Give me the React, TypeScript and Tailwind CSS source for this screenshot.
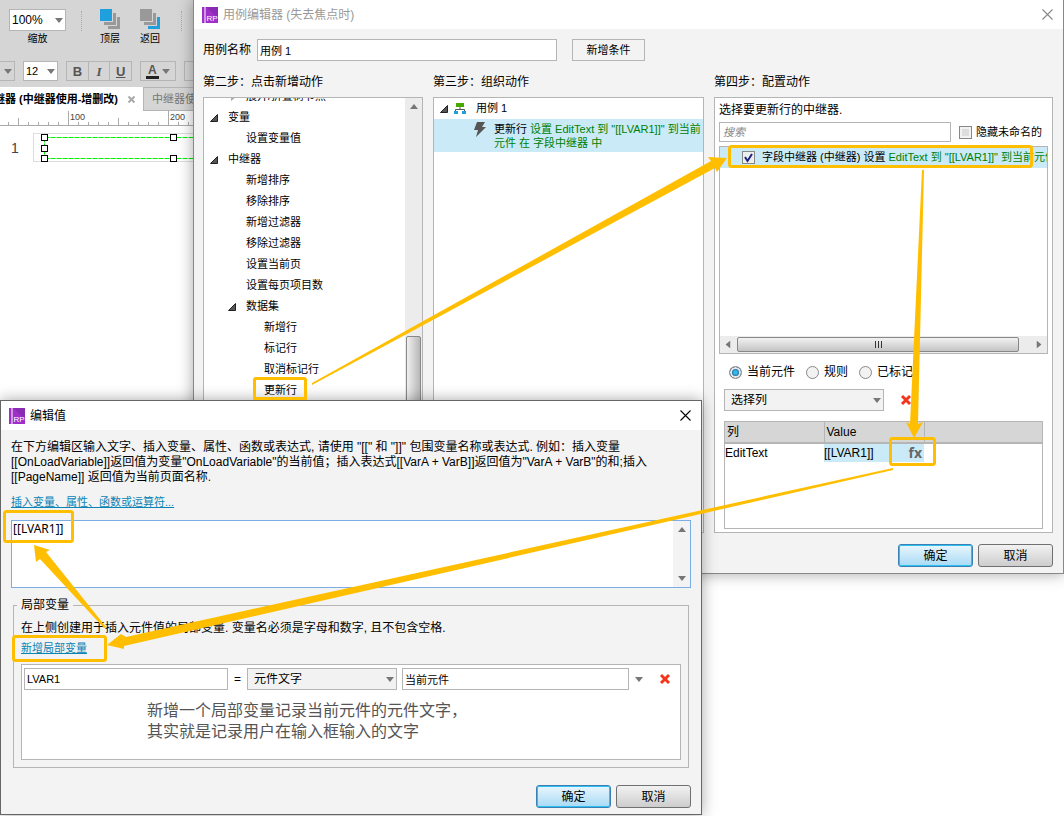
import { useState } from "react";
import type { ReactNode } from "react";
import clsx from "clsx";

const FONT = "font-['Liberation_Sans','Noto_Sans_CJK_SC',sans-serif]";

type TreeRow = { label: string; level: 0 | 1 | 2 | 3; open?: boolean };

const actionTree: TreeRow[] = [
  { label: "变量", level: 0, open: true },
  { label: "设置变量值", level: 2 },
  { label: "中继器", level: 0, open: true },
  { label: "新增排序", level: 2 },
  { label: "移除排序", level: 2 },
  { label: "新增过滤器", level: 2 },
  { label: "移除过滤器", level: 2 },
  { label: "设置当前页", level: 2 },
  { label: "设置每页项目数", level: 2 },
  { label: "数据集", level: 1, open: true },
  { label: "新增行", level: 3 },
  { label: "标记行", level: 3 },
  { label: "取消标记行", level: 3 },
  { label: "更新行", level: 3 },
  { label: "删除行", level: 3 },
];

const levelPadding = {
  0: "pl-1.5",
  1: "pl-6",
  2: "pl-6",
  3: "pl-[42px]",
};

function Caret({ className }: { className?: string }) {
  return (
    <svg viewBox="0 0 8 5" className={clsx("h-[5px] w-2 shrink-0", className)}>
      <path d="M0 0h8L4 5z" fill="#777" />
    </svg>
  );
}

function OpenMark({ show = true }: { show?: boolean }) {
  return (
    <svg viewBox="0 0 8 8" className="h-2 w-2 shrink-0">
      {show && <path d="M7.5 0.5v7h-7z" fill="#555" stroke="#222" />}
    </svg>
  );
}

function Logo() {
  return (
    <svg viewBox="0 0 16 16" className="h-4 w-4 shrink-0">
      <rect width="16" height="16" fill="#a02fc9" />
      <path d="M4 0h12v11z" fill="#8a2bb3" />
      <rect x="2.5" width="1" height="16" fill="#fff" />
      <text
        x="4.5"
        y="14"
        fontSize="8"
        fontFamily="Liberation Sans, sans-serif"
        fill="#fff"
      >
        RP
      </text>
    </svg>
  );
}

function RedCross() {
  return (
    <svg viewBox="0 0 12 12" className="h-3 w-3">
      <path d="M2 2l8 8M10 2l-8 8" stroke="#f4361e" strokeWidth="3" />
    </svg>
  );
}

function TitleBar({ title, active }: { title: string; active?: boolean }) {
  return (
    <header className="flex h-[29px] shrink-0 items-center gap-[5px] bg-white pr-2.5 pl-2">
      <Logo />
      <h1
        className={clsx(
          "flex-1 text-xs",
          active ? "text-black" : "text-[#999]"
        )}
      >
        {title}
      </h1>
      <button aria-label="关闭">
        <svg viewBox="0 0 11 11" className="h-[11px] w-[11px]">
          <path
            d="M0.5 0.5l10 10M10.5 0.5l-10 10"
            stroke={active ? "#000" : "#888"}
            strokeWidth="1.1"
          />
        </svg>
      </button>
    </header>
  );
}

function DialogButton({
  primary,
  children,
}: {
  primary?: boolean;
  children: ReactNode;
}) {
  return (
    <button
      className={clsx(
        "h-[23px] w-[75px] rounded-[3px] border text-xs leading-none text-black",
        primary
          ? "border-[#3c7fb1] bg-linear-to-b from-[#e9f6fd] to-[#a7daf5] inset-ring inset-ring-[#2cc0f5]"
          : "border-[#707070] bg-linear-to-b from-[#f2f2f2] to-[#cdcdcd]"
      )}
    >
      {children}
    </button>
  );
}

function SelectBox({
  label,
  value,
  className,
}: {
  label: string;
  value: string;
  className?: string;
}) {
  return (
    <div className={clsx("relative", className)}>
      <select
        aria-label={label}
        className="block h-[22px] w-full appearance-none border border-[#b5b5b5] bg-[#f2f2f2] pl-1.5 text-xs leading-none"
      >
        <option>{value}</option>
      </select>
      <Caret className="pointer-events-none absolute top-[9px] right-[3px]" />
    </div>
  );
}

function LayersIcon({ top }: { top: boolean }) {
  return (
    <svg viewBox="0 0 20 20" className="h-5 w-5">
      <path
        d="M17 8v9H8v3h12V8z"
        fill={top ? "#999" : "#1f9fdc"}
      />
      <path d="M13 4v9H4v3h12V4z" fill="#999" />
      <rect width="12" height="12" fill={top ? "#1f9fdc" : "#999"} />
    </svg>
  );
}

function Ruler() {
  const ticks = Array.from({ length: 20 }, (_, i) => i * 10 + 8.5);
  return (
    <svg className="block h-[15px] w-full bg-white">
      {ticks.map((x) => {
        const major = x === 68.5 || x === 168.5;
        const middle = x === 18.5 || x === 118.5;
        const y = major ? 0 : middle ? 7 : 11;
        return <path key={x} d={`M${x} ${y}V15`} stroke="#aaa" />;
      })}
      <path d="M0 14.5H1064" stroke="#aaa" />
      <g fontSize="9" fill="#444">
        <text x="70" y="9">
          100
        </text>
        <text x="170" y="9">
          200
        </text>
      </g>
    </svg>
  );
}

function Workspace() {
  const handles = [
    [41, 8],
    [41, 19],
    [41, 29],
    [170, 8],
    [170, 29],
  ];
  return (
    <div className="flex h-full flex-col">
      <div className="h-[87px] bg-[#d5d5d5] pt-[9px]">
        <div className="flex h-[35px] items-start pl-[9px] text-[10px] leading-3">
          <label className="flex w-[57px] flex-col items-center gap-0.5">
            <span className="relative w-full">
              <select className="block h-[22px] w-full appearance-none border border-[#b5b5b5] bg-white pl-0.5 text-xs">
                <option>100%</option>
              </select>
              <Caret className="absolute top-[9px] right-[3px]" />
            </span>
            缩放
          </label>
          <span className="mt-0.5 ml-[15px] h-5 border-l border-dotted border-[#aaa]" />
          <button className="ml-[18px] flex flex-col items-center gap-1">
            <LayersIcon top />
            顶层
          </button>
          <button className="ml-5 flex flex-col items-center gap-1">
            <LayersIcon top={false} />
            返回
          </button>
          <span className="mt-0.5 ml-[21px] h-5 border-l border-dotted border-[#aaa]" />
        </div>
        <div className="mt-[17px] flex h-5 items-stretch gap-2 text-[#555]">
          <button
            aria-label="字体"
            className="flex w-[15px] items-center border border-l-0 border-[#b5b5b5] pl-1"
          >
            <Caret />
          </button>
          <span className="relative w-[35px]">
            <select
              aria-label="字号"
              className="block h-5 w-full appearance-none border border-[#b5b5b5] bg-white pl-0.5 text-[11px] text-black"
            >
              <option>12</option>
            </select>
            <Caret className="absolute top-2 right-[3px]" />
          </span>
          <div className="flex w-[66px] divide-x divide-[#b5b5b5] border border-[#b5b5b5] text-[13px] leading-none">
            <button className="flex-1 font-bold">B</button>
            <button className="flex-1 font-['Liberation_Serif',serif] font-bold italic">
              I
            </button>
            <button className="flex-1 font-bold underline">U</button>
          </div>
          <button
            aria-label="文字颜色"
            className="flex w-9 items-center justify-between border border-[#b5b5b5] px-[5px] text-xs font-bold"
          >
            <span className="border-b-[3px] border-[#222] px-0.5 leading-3">
              A
            </span>
            <Caret />
          </button>
          <span className="w-10 border border-[#b5b5b5]" />
        </div>
      </div>
      <div className="flex h-6 bg-[#d5d5d5] text-[11px]">
        <div className="flex w-[143px] items-center justify-end gap-2.5 overflow-hidden bg-white pr-2 font-bold whitespace-nowrap">
          <span>中继器 (中继器使用-增删改)</span>
          <button aria-label="关闭标签">
            <svg viewBox="0 0 7 7" className="h-[7px] w-[7px]">
              <path d="M0.5 0.5l6 6M6.5 0.5l-6 6" stroke="#aaa" strokeWidth="2" />
            </svg>
          </button>
        </div>
        <div className="flex flex-1 items-center border border-[#b5b5b5] pl-2 text-[#777]">
          中继器使用
        </div>
      </div>
      <Ruler />
      <div className="flex-1 bg-white">
        <svg className="h-20 w-[200px]">
          <rect x="33.5" y="7.5" width="200" height="28" fill="none" stroke="#ddd" />
          <path
            d="M44.5 11.5H200M44.5 32.5H200M44.5 11.5V32"
            stroke="#00f000"
            strokeDasharray="5 1"
          />
          {handles.map(([x, y]) => (
            <rect
              key={`${x}-${y}`}
              x={x + 0.5}
              y={y + 0.5}
              width="6"
              height="6"
              fill="#fff"
              stroke="#000"
            />
          ))}
          <text x="11" y="27" fontSize="14" fill="#444">
            1
          </text>
        </svg>
      </div>
    </div>
  );
}

function ActionTree() {
  return (
    <div className="flex h-[436px] border border-[#b5b5b5] bg-white">
      <div className="flex-1 overflow-hidden">
        <ul className="-mt-[12px] text-[11px] leading-[21px]">
          <li className="flex h-[21px] items-center gap-2 pl-[26px]">
            <svg viewBox="0 0 8 8" className="h-2 w-2">
              <path d="M1 0l5 4-5 4z" fill="#aaa" />
            </svg>
            展开/折叠树节点
          </li>
          {actionTree.map((row) => (
            <li
              key={row.label}
              className={clsx(
                "flex h-[21px] items-center gap-2.5",
                levelPadding[row.level]
              )}
            >
              <OpenMark show={!!row.open} />
              {row.label}
            </li>
          ))}
        </ul>
      </div>
      <div className="flex w-[17px] flex-col items-center bg-[#ececec] pt-1.5">
        <Caret className="rotate-180" />
        <div className="mt-[227px] h-[150px] w-[15px] rounded-xs border border-[#888] bg-linear-to-r from-[#f0f0f0] to-[#b8b8b8]" />
      </div>
    </div>
  );
}

function CasePanel() {
  return (
    <div className="h-[436px] border border-[#b5b5b5] bg-white text-[11px]">
      <div className="flex h-[21px] items-center pl-1.5">
        <OpenMark />
        <svg viewBox="0 0 12 12" className="mr-[10px] ml-[6px] h-3 w-3">
          <rect x="2" width="8" height="4" fill="#4a0" />
          <path d="M6 4v3M1.500 9V6.500h9V9" stroke="#555" fill="none" />
          <rect y="8" width="4" height="3" fill="#1f9fdc" />
          <rect x="8" y="8" width="4" height="3" fill="#1f9fdc" />
        </svg>
        用例 1
      </div>
      <div className="flex h-[33px] gap-2 bg-[#cbeaf7] pt-[3px] pl-[40px] leading-[14px] whitespace-nowrap">
        <svg viewBox="0 0 12 15" className="h-[15px] w-3 shrink-0">
          <path d="M3 0h8L8 5h4L2 15l2-7H0z" fill="#555" />
        </svg>
        <p className="text-[#008000]">
          <span className="text-black">更新行</span> 设置 EditText 到
          "[[LVAR1]]" 到当前
          <br />
          元件 在 字段中继器 中
        </p>
      </div>
    </div>
  );
}

function TargetRadio({
  label,
  checked,
  onChange,
}: {
  label: string;
  checked: boolean;
  onChange: () => void;
}) {
  return (
    <label className="flex items-center gap-[5px]">
      <input
        type="radio"
        name="target"
        checked={checked}
        onChange={onChange}
        className="h-[13px] w-[13px] appearance-none rounded-full border border-[#888] bg-[#f2f2f2] p-0.5 bg-clip-border checked:bg-radial checked:from-[#39b6ea] checked:from-20% checked:to-[#0c4a78] checked:to-60% checked:inset-ring-2 checked:inset-ring-[#e4e9ec]"
      />
      {label}
    </label>
  );
}

function ConfigPanel() {
  const [target, setTarget] = useState("当前元件");
  const [picked, setPicked] = useState(true);

  return (
    <div className="h-[436px] border border-[#b5b5b5] bg-white pr-1 pl-1 text-xs">
      <p className="pt-[5px] leading-[14px]">选择要更新行的中继器.</p>
      <div className="mt-[5px] flex items-center text-[11px]">
        <input
          aria-label="搜索"
          placeholder="搜索"
          className="h-5 min-w-0 flex-1 border border-[#b5b5b5] px-[3px] italic placeholder:text-[#888]"
        />
        <label className="ml-2 flex items-center gap-1 pr-1.5 whitespace-nowrap">
          <input
            type="checkbox"
            className="h-[13px] w-[13px] appearance-none border border-[#888] bg-[#ddd] inset-ring-2 inset-ring-[#f2f2f2]"
          />
          隐藏未命名的
        </label>
      </div>
      <div className="mt-1 flex h-[208px] flex-col border border-[#b5b5b5]">
        <label className="flex h-[21px] items-center overflow-hidden bg-[#cbeaf7] pl-[22px] text-[11px] whitespace-nowrap">
          <span className="relative mr-[7px] h-[13px] w-[13px] shrink-0">
            <input
              type="checkbox"
              checked={picked}
              onChange={() => setPicked(!picked)}
              className="block h-[13px] w-[13px] appearance-none border border-[#888] bg-[#eee]"
            />
            {picked && (
              <svg
                viewBox="0 0 13 13"
                className="pointer-events-none absolute inset-0"
              >
                <path d="M3 6l2.500 4L10 3" stroke="#1a237e" strokeWidth="2" fill="none" />
              </svg>
            )}
          </span>
          字段中继器 (中继器) 设置&nbsp;
          <span className="text-[#008000]">
            EditText 到 "[[LVAR1]]" 到当前元件
          </span>
        </label>
        <div className="flex-1" />
        <div className="flex h-[17px] items-center justify-between bg-[#ececec] px-1">
          <Caret className="rotate-90" />
          <div className="mr-4 ml-[5px] flex h-[15px] flex-1 items-center justify-center gap-0.5 rounded-xs border border-[#888] bg-linear-to-b from-[#f2f2f2] to-[#c4c4c4]">
            <span className="h-[7px] w-px bg-[#333]" />
            <span className="h-[7px] w-px bg-[#333]" />
            <span className="h-[7px] w-px bg-[#333]" />
          </div>
          <Caret className="-rotate-90" />
        </div>
      </div>
      <div className="mt-[11px] flex h-[14px] items-center gap-[11px] pl-[10px]">
        {["当前元件", "规则", "已标记"].map((name) => (
          <TargetRadio
            key={name}
            label={name}
            checked={target === name}
            onChange={() => setTarget(name)}
          />
        ))}
      </div>
      <div className="mt-2.5 flex items-center gap-4 pl-[5px]">
        <SelectBox label="列" value="选择列" className="w-[160px]" />
        <button aria-label="删除列">
          <RedCross />
        </button>
      </div>
      <div className="mt-2.5 mr-[5px] ml-[5px] h-[108px] border border-[#b5b5b5]">
        <table className="w-full table-fixed border-collapse text-left">
          <thead>
            <tr className="h-[21px] border-b-2 border-[#b5b5b5] bg-[#d6d6d6]">
              <th className="w-[99px] border-r border-[#b5b5b5] pl-0.5 font-normal">
                列
              </th>
              <th className="w-[100px] border-r border-[#b5b5b5] pl-0.5 font-normal">
                Value
              </th>
              <th />
            </tr>
          </thead>
          <tbody>
            <tr className="h-[18px]">
              <td>EditText</td>
              <td className="bg-[#cbeaf7]">
                <div className="flex items-center justify-between pr-0.5 leading-[18px]">
                  [[LVAR1]]
                  <button className="font-['Open_Sans',sans-serif] text-sm leading-[18px] font-bold text-[#666]">
                    fx
                  </button>
                </div>
              </td>
              <td />
            </tr>
          </tbody>
        </table>
      </div>
    </div>
  );
}

function CaseEditor() {
  return (
    <section className="absolute top-0 right-0 left-[193px] border-r border-b border-l border-[#888] bg-[#f3f3f3] shadow-[0_0_14px_rgba(0,0,0,0.35)]">
      <TitleBar title="用例编辑器 (失去焦点时)" />
      <div className="pt-2.5 pr-2.5 pb-1.5 pl-[9px] text-xs">
        <div className="flex h-[22px] items-center">
          <label htmlFor="case-name">用例名称</label>
          <input
            id="case-name"
            defaultValue="用例 1"
            className="mr-[15px] ml-1.5 h-[22px] w-[300px] border border-[#b5b5b5] bg-white px-0.5 text-[11px]"
          />
          <button className="h-[22px] w-[73px] border border-[#b5b5b5] text-[11px]">
            新增条件
          </button>
        </div>
        <div className="mt-[14px] flex gap-2.5">
          <div className="w-[220px] shrink-0">
            <h2 className="mb-2 leading-[14px]">第二步：点击新增动作</h2>
            <ActionTree />
          </div>
          <div className="min-w-0 flex-1">
            <h2 className="mb-2 leading-[14px]">第三步：组织动作</h2>
            <CasePanel />
          </div>
          <div className="w-[339px] shrink-0">
            <h2 className="mb-2 leading-[14px]">第四步：配置动作</h2>
            <ConfigPanel />
          </div>
        </div>
        <div className="mt-[11px] flex justify-end gap-[5px]">
          <DialogButton primary>确定</DialogButton>
          <DialogButton>取消</DialogButton>
        </div>
      </div>
    </section>
  );
}

function ValueEditor() {
  return (
    <section className="absolute top-[400px] left-0 w-[702px] border border-[#666] bg-[#f3f3f3] shadow-[0_0_14px_rgba(0,0,0,0.35)]">
      <TitleBar title="编辑值" active />
      <div className="px-2.5 pt-2.5 pb-1.5 text-xs">
        <p className="leading-[15px] whitespace-nowrap">
          在下方编辑区输入文字、插入变量、属性、函数或表达式, 请使用 "[[" 和
          "]]" 包围变量名称或表达式. 例如：插入变量
          <br />
          [[OnLoadVariable]]返回值为变量"OnLoadVariable"的当前值；插入表达式[[VarA
          + VarB]]返回值为"VarA + VarB"的和;插入
          <br />
          [[PageName]] 返回值为当前页面名称.
        </p>
        <a
          href="#insert"
          className="mt-2.5 block text-[11px] leading-[14px] text-[#0a84b5] underline"
        >
          插入变量、属性、函数或运算符...
        </a>
        <div className="mt-[11px] flex h-[68px] border border-[#7aaee4] bg-white">
          <textarea
            aria-label="表达式"
            defaultValue="[[LVAR1]]"
            className="flex-1 resize-none px-px font-['Noto_Sans',sans-serif] text-xs leading-4 outline-none"
          />
          <div className="flex w-[17px] flex-col items-center justify-between bg-[#f3f3f3] py-1.5">
            <Caret className="rotate-180" />
            <Caret />
          </div>
        </div>
        <fieldset className="mx-0.5 mt-2.5 h-[170px] border border-[#b5b5b5] px-[7px]">
          <legend className="-ml-1 px-1 leading-[14px]">局部变量</legend>
          <p className="mt-[9px] leading-[14px]">
            在上侧创建用于插入元件值的局部变量. 变量名必须是字母和数字,
            且不包含空格.
          </p>
          <a
            href="#add"
            className="mt-[6px] inline-block text-[11px] leading-[14px] text-[#0a84b5] underline"
          >
            新增局部变量
          </a>
          <div className="mt-2 h-24 border border-[#b5b5b5] bg-white px-0.5 pt-[3px]">
            <div className="flex items-center">
              <input
                aria-label="变量名"
                defaultValue="LVAR1"
                className="h-[22px] w-[204px] border border-[#b5b5b5] px-0.5 text-[11px]"
              />
              <span className="w-[19px] text-center">=</span>
              <SelectBox
                label="变量类型"
                value="元件文字"
                className="mr-[5px] w-[150px]"
              />
              <input
                aria-label="元件"
                defaultValue="当前元件"
                className="h-[22px] w-[227px] border border-[#b5b5b5] px-0.5 text-[11px]"
              />
              <button aria-label="选择元件" className="ml-1.5">
                <Caret />
              </button>
              <button aria-label="删除变量" className="ml-4">
                <RedCross />
              </button>
            </div>
            <p className="mt-[10px] pl-[123px] text-base leading-[21px] text-[#555]">
              新增一个局部变量记录当前元件的元件文字，
              <br />
              其实就是记录用户在输入框输入的文字
            </p>
          </div>
        </fieldset>
        <div className="mt-[17px] flex justify-end gap-[5px]">
          <DialogButton primary>确定</DialogButton>
          <DialogButton>取消</DialogButton>
        </div>
      </div>
    </section>
  );
}

function Annotations() {
  return (
    <svg
      width="1064"
      height="816"
      className="pointer-events-none absolute top-0 left-0"
      aria-hidden="true"
    >
      <g fill="none" stroke="#ffbf00" strokeWidth="3">
        <path d="M254.500 400V380q0-1.500 1.500-1.500h48q1.500 0 1.500 1.500v18.500h-51" />
        <rect x="729.500" y="146.500" width="302" height="20" rx="2" />
        <rect x="890.500" y="438.500" width="44" height="26" rx="2" />
        <rect x="4.500" y="511.500" width="68" height="30" rx="2" />
        <rect x="13.500" y="636.500" width="92" height="24" rx="2" />
      </g>
      <g fill="#ffbf00">
        <path d="M312 383L711 161L708 157L727 158L717 172L715 168L312 385Z" />
        <path d="M922 170L910 424L906 422L914 438L923 422L918 424L924 170Z" />
        <path d="M893 468L126 637L121 634L107 645L124 649L124 646L893 470Z" />
        <path d="M106 627L46 552L50 550L34 545L36 562L40 559L104 628Z" />
      </g>
    </svg>
  );
}

export default function App() {
  return (
    <main
      className={clsx(
        "relative h-screen w-full overflow-hidden bg-white text-black",
        FONT
      )}
    >
      <Workspace />
      <CaseEditor />
      <ValueEditor />
      <Annotations />
    </main>
  );
}
